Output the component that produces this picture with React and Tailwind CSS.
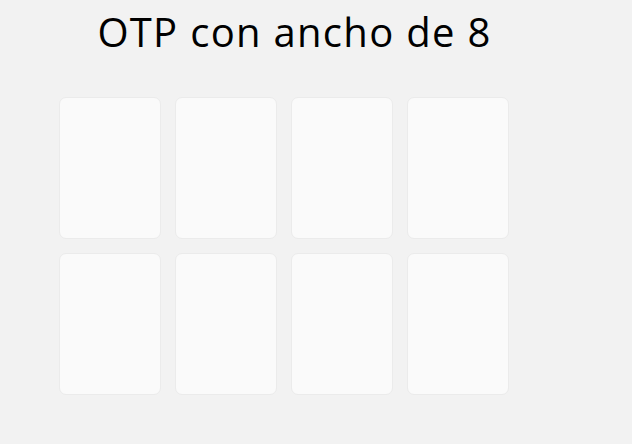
import React from "react";

const OtpBox = () => (
  <div className="w-[102px] h-[142px] rounded-[7px] bg-[#fafafa] border border-[#ebebeb]" />
);

export default function App() {
  return (
    <div className="w-[632px] h-[444px] bg-[#f2f2f2] overflow-hidden" style={{ fontFamily: "'Open Sans', sans-serif" }}>
      <div className="pl-[59px] pt-[7px]">
        <h1 className="w-[471px] text-center text-[40px] leading-[50px] font-normal text-black tracking-[1.3px]">
          OTP con ancho de 8
        </h1>
        <div className="grid grid-cols-4 gap-x-[14px] gap-y-[14px] w-max mt-[40px]">
          {Array.from({ length: 8 }).map((_, i) => (
            <OtpBox key={i} />
          ))}
        </div>
      </div>
    </div>
  );
}
